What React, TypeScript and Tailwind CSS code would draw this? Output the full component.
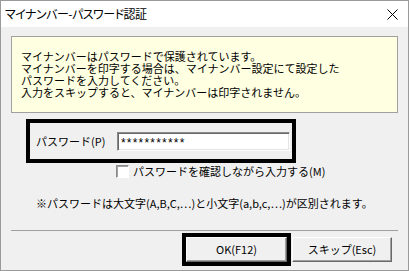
export default function App() {
  return (
    <div className="flex h-[271px] w-[409px] flex-col border border-[#9a9a9a] font-['Noto_Sans_CJK_JP',sans-serif] text-black">
      {/* title bar */}
      <div className="flex h-[26px] shrink-0 items-center bg-white pl-[4px]">
        <span className="text-[12px] leading-none tracking-[-0.5px] [font-feature-settings:'palt']">
          マイナンバー-パスワード認証
        </span>
        <svg
          className="ml-auto mr-[10px]"
          width="11"
          height="11"
          viewBox="0 0 11 11"
        >
          <path d="M0.5 0.5L10.5 10.5M10.5 0.5L0.5 10.5" stroke="#000" strokeWidth="1" />
        </svg>
      </div>

      {/* body */}
      <div className="flex flex-1 flex-col bg-[#f0f0f0] px-[10px]">
        <div className="mt-[9px] h-[77px] border border-[#a0a0a0] bg-[#ffffe1] pl-[9px] pt-[13px] text-[11px] leading-[12px]">
          <p>マイナンバーはパスワードで保護されています。</p>
          <p>マイナンバーを印字する場合は、マイナンバー設定にて設定した</p>
          <p>パスワードを入力してください。</p>
          <p>入力をスキップすると、マイナンバーは印字されません。</p>
        </div>

        <div className="ml-[15px] mt-[6px] flex h-[44px] w-[270px] items-center border-4 border-black">
          <span className="w-[87px] pl-[6px] text-[11px] leading-none">
            パスワード(P)
          </span>
          <div className="flex h-[19px] w-[173px] items-center border border-b-white border-l-[#8a8a8a] border-r-white border-t-[#8a8a8a] bg-white pl-[3px] pt-[3px] font-['Liberation_Sans',sans-serif] text-[12px] leading-none tracking-[1.2px] shadow-[inset_1px_1px_0_#696969,inset_-1px_-1px_0_#e3e3e3]">
            ***********
          </div>
        </div>

        <div className="ml-[105px] mt-[2px] flex items-center gap-[4px]">
          <span className="h-[13px] w-[13px] border border-b-white border-l-[#8a8a8a] border-r-white border-t-[#8a8a8a] bg-white shadow-[inset_1px_1px_0_#a0a0a0]" />
          <span className="text-[11px] leading-[13px]">
            パスワードを確認しながら入力する(M)
          </span>
        </div>

        <p className="ml-[25px] mt-[19px] text-[11px] leading-[12px]">
          ※パスワードは大文字(A,B,C,…)と小文字(a,b,c,…)が区別されます。
        </p>

        <div className="mt-[21px] h-px bg-[#a0a0a0]" />

        <div className="mr-[6px] mt-[2px] flex items-center justify-end">
          <div className="border-4 border-black">
            <button className="flex h-[25px] w-[101px] items-center justify-center border border-b-[#696969] border-l-white border-r-[#696969] border-t-white bg-[#f0f0f0] text-[11px] font-normal leading-none shadow-[inset_-1px_-1px_0_#a0a0a0]">
              OK(F12)
            </button>
          </div>
          <button className="ml-[1px] flex h-[25px] w-[100px] items-center justify-center border border-b-[#696969] border-l-white border-r-[#696969] border-t-white bg-[#f0f0f0] text-[11px] font-normal leading-none shadow-[inset_-1px_-1px_0_#a0a0a0]">
            スキップ(Esc)
          </button>
        </div>
      </div>
    </div>
  );
}
